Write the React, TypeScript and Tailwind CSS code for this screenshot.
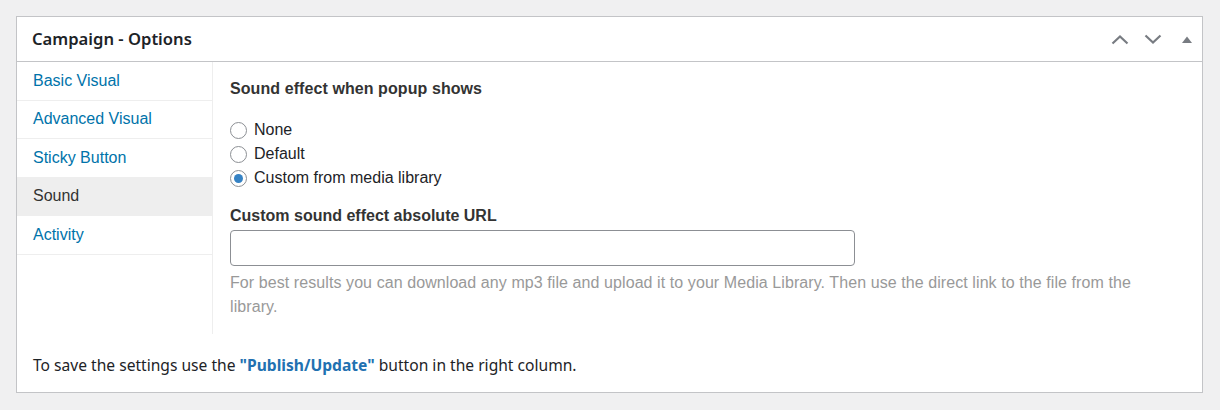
import React from 'react';

const tabs = ['Basic Visual', 'Advanced Visual', 'Sticky Button', 'Sound', 'Activity'];

function Radio({ label, checked = false }: { label: string; checked?: boolean }) {
  return (
    <label className="flex items-center h-6">
      <span className="w-[17px] h-[17px] rounded-full border border-[#8c8f94] bg-white flex items-center justify-center shrink-0">
        {checked && <span className="w-[9px] h-[9px] rounded-full bg-[#3582c4]" />}
      </span>
      <span className="ml-[7px] text-[#1d2327]">{label}</span>
    </label>
  );
}

function HeaderIcons() {
  return (
    <div className="flex items-center gap-[15px] text-[#787c82]">
      <svg width="18" height="11" viewBox="0 0 18 11" fill="none">
        <path d="M1.5 9.5 L9 2.5 L16.5 9.5" stroke="currentColor" strokeWidth="2.2" />
      </svg>
      <svg width="18" height="11" viewBox="0 0 18 11" fill="none">
        <path d="M1.5 1.5 L9 8.5 L16.5 1.5" stroke="currentColor" strokeWidth="2.2" />
      </svg>
      <svg width="10" height="7" viewBox="0 0 10 7" className="ml-[5px]">
        <path d="M0 7 L5 0.5 L10 7 Z" fill="currentColor" />
      </svg>
    </div>
  );
}

export default function App() {
  return (
    <div className="min-h-screen bg-[#f0f0f1] pt-4 pl-4 pr-[17px] pb-4">
      <div className="border border-[#c3c4c7] bg-white">
        <div className="h-[45px] border-b border-[#c3c4c7] flex items-center justify-between pl-[15px] pr-[10px]">
          <h2 className="text-[16.6px] font-semibold text-[#1d2327] font-['Noto_Sans',sans-serif] pt-[1px]">
            Campaign - Options
          </h2>
          <HeaderIcons />
        </div>

        <div className="flex font-['Liberation_Sans',Arial,sans-serif] text-[16px]">
          <div className="w-[196px] border-r border-[#eeeeee] shrink-0">
            {tabs.map((t) => (
              <div
                key={t}
                className={`h-[38.5px] border-b border-[#eeeeee] flex items-center pl-4 ${
                  t === 'Sound' ? 'bg-[#eeeeee] text-[#333333]' : 'text-[#0073aa]'
                }`}
              >
                {t}
              </div>
            ))}
          </div>

          <div className="flex-1 px-[17px] pt-[15px] pb-[15px]">
            <div className="font-bold text-[#333333] leading-6 tracking-[0.005em]">Sound effect when popup shows</div>
            <div className="mt-[17px] flex flex-col leading-6">
              <Radio label="None" />
              <Radio label="Default" />
              <Radio label="Custom from media library" checked />
            </div>
            <div className="mt-[14px] font-bold text-[#333333] leading-6">Custom sound effect absolute URL</div>
            <input
              type="text"
              className="mt-[2px] block w-[625px] h-9 border border-[#8c8f94] rounded-[4px] bg-white outline-none"
            />
            <p className="mt-[5px] leading-6 text-[#999999] tracking-[0.005em] max-w-[940px]">
              For best results you can download any mp3 file and upload it to your Media Library. Then use the direct link to the file from the library.
            </p>
          </div>
        </div>

        <div className="px-4 pt-[21px] pb-[17px] leading-5 text-[15.6px] text-[#1d2327] font-['Noto_Sans',sans-serif]">
          To save the settings use the{' '}
          <span className="font-bold text-[#2271b1]">"Publish/Update"</span> button in the right column.
        </div>
      </div>
    </div>
  );
}
